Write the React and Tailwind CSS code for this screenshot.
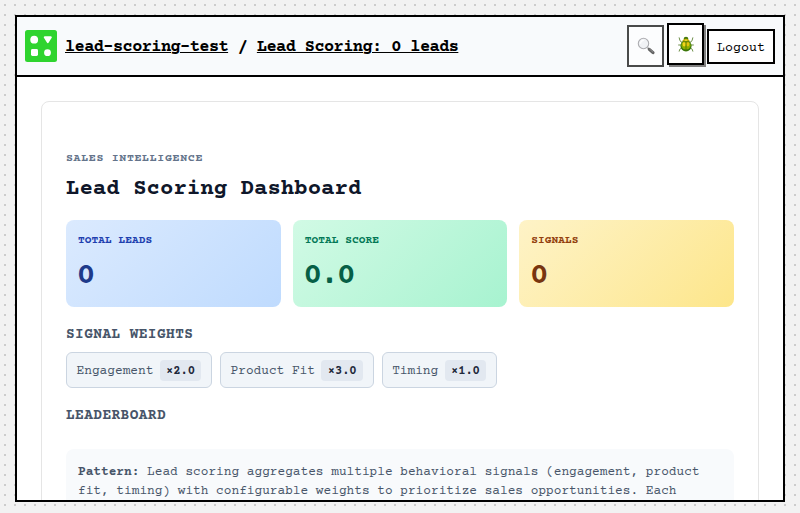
const stats = [
  { label: "TOTAL LEADS", value: "0", box: "from-[#dbeafe] to-[#bfdbfe]", head: "text-[#1e40af]", num: "text-[#1e3a8a]" },
  { label: "TOTAL SCORE", value: "0.0", box: "from-[#d1fae5] to-[#a7f3d0]", head: "text-[#047857]", num: "text-[#065f46]" },
  { label: "SIGNALS", value: "0", box: "from-[#fef3c7] to-[#fde68a]", head: "text-[#92400e]", num: "text-[#78350f]" },
];

const weights = [
  ["Engagement", "×2.0"],
  ["Product Fit", "×3.0"],
  ["Timing", "×1.0"],
];

function Logo() {
  return (
    <svg className="size-8 shrink-0" viewBox="0 0 32 32">
      <rect width="32" height="32" rx="2.5" fill="#2fd42f" />
      <g fill="#fff">
        <circle cx="9.2" cy="9.7" r="3.9" />
        <path d="M19.8 6.2h6a1 1 0 0 1 .9 1.5l-3 4.9a1 1 0 0 1-1.8 0l-3-4.9a1 1 0 0 1 .9-1.5z" />
        <rect x="6" y="19" width="7" height="7" rx="1.4" />
        <circle cx="22.5" cy="22.7" r="3.4" />
      </g>
    </svg>
  );
}

function Magnifier() {
  return (
    <svg className="size-[18px]" viewBox="0 0 18 18">
      <path d="M10.5 10.5l2 2" stroke="#777" strokeWidth="1.6" />
      <path d="M12.3 12.3l3.7 3.4" stroke="#222" strokeWidth="3" strokeLinecap="round" />
      <path d="M12.5 12l3.3 3" stroke="#777" strokeWidth=".7" strokeLinecap="round" />
      <circle cx="6.5" cy="6.5" r="5.2" fill="#eef0f3" stroke="#8d8d92" strokeWidth="1.1" />
      <path d="M3.6 6.2a3 3 0 0 1 2.8-2.8" stroke="#fff" strokeWidth="1.2" fill="none" strokeLinecap="round" />
    </svg>
  );
}

function Beetle() {
  return (
    <svg className="size-4" viewBox="0 0 16 16">
      <g fill="none" stroke="#6f8f4a" strokeWidth="1" strokeLinecap="round" strokeLinejoin="round">
        <path d="M4 6.5L2 4.8 1.2 1.8M12 6.5l2-1.7.8-3M3 9H.6M13 9h2.4M3.8 12l-2 1.2-.6 2M12.2 12l2 1.2.6 2" />
      </g>
      <ellipse cx="8" cy="2.7" rx="2.3" ry="1.9" fill="#477a0c" />
      <path d="M4.3 5.4C4.5 3.5 6 2.7 8 2.7s3.5.8 3.7 2.7z" fill="#b9a800" />
      <ellipse cx="8" cy="10" rx="5.6" ry="5.4" fill="#39780a" />
      <ellipse cx="8" cy="9.2" rx="4.6" ry="4.3" fill="#8fae00" />
      <ellipse cx="6.2" cy="8" rx="1.6" ry="2.5" fill="#f2d51c" />
      <ellipse cx="9.8" cy="8" rx="1.5" ry="2.4" fill="#e4c410" />
      <path d="M3.8 5.8h8.4M8 6v9" stroke="#4b6b05" strokeWidth=".7" />
      <ellipse cx="8" cy="4.3" rx="1.6" ry=".7" fill="#f5dc35" />
    </svg>
  );
}

export default function App() {
  return (
    <div className="h-[513px] w-[800px] overflow-hidden bg-[#f2f2f2] bg-[radial-gradient(circle,#cccccc_1px,transparent_1px)] bg-[length:10px_10px] px-[15px] pt-[15px] font-['Courier_Prime','Courier_New',Courier,'Liberation_Mono',monospace]">
      <div className="flex h-[487px] flex-col overflow-hidden border-2 border-black bg-white">
        <header className="flex h-[60px] shrink-0 items-center border-b-2 border-black bg-[#f8fafc] px-2">
          <Logo />
          <h1 className="ml-2 grow whitespace-pre pt-1 text-[17px] font-bold tracking-[-0.6px] text-black">
            <a className="underline decoration-1 underline-offset-1">lead-scoring-test</a> / <a className="underline decoration-1 underline-offset-1">Lead Scoring: 0 leads</a>
          </h1>
          <div className="flex items-center gap-[3px] text-[13.333px]">
            <button className="flex h-[42px] w-[37px] items-center justify-center border-2 border-black bg-white opacity-70"><Magnifier /></button>
            <button className="mb-1 flex h-[42px] w-[37px] items-center justify-center border-2 border-black bg-white shadow-[2px_2px_0_#808080]"><Beetle /></button>
            <button className="h-[35px] w-[68px] border-2 border-black bg-white pt-[5px] text-black">Logout</button>
          </div>
        </header>
        <main className="min-h-0 grow overflow-hidden p-6">
          <section className="rounded-lg border border-[#e5e5e5] px-6 pt-12 pb-6">
            <p className="text-[11.6px] leading-[17px] font-bold tracking-[0.66px] text-[#64748b]">SALES INTELLIGENCE</p>
            <h2 className="mt-[7px] text-[22.4px] leading-[30px] font-bold text-[#0f172a]">Lead Scoring Dashboard</h2>
            <div className="mt-4 grid grid-cols-3 gap-3">
              {stats.map((s) => (
                <div key={s.label} className={"h-[87px] rounded-lg bg-linear-135 p-3 " + s.box}>
                  <p className={"pt-px text-[11.2px] leading-4 font-bold tracking-[0.04px] " + s.head}>{s.label}</p>
                  <p className={"mt-[7px] -ml-px text-[30px] leading-[42px] font-bold tracking-[-1.2px] " + s.num}>{s.value}</p>
                </div>
              ))}
            </div>
            <h3 className="mt-[19px] text-[14.5px] leading-[19px] font-bold tracking-[0.4px] text-[#475569]">SIGNAL WEIGHTS</h3>
            <div className="mt-[7px] flex gap-2">
              {weights.map(([name, weight]) => (
                <div key={name} className="flex h-9 items-center gap-[6.4px] rounded-md border border-[#cbd5e1] bg-[#f1f5f9] px-[9.6px] text-[12.8px] text-[#475569]">
                  <span className="pt-[3px]">{name}</span>
                  <span className="h-[21px] rounded bg-[#e2e8f0] px-[6.4px] pt-px text-[12.2px] leading-[21px] font-bold tracking-[-0.1px] text-[#1e293b]">{weight}</span>
                </div>
              ))}
            </div>
            <h3 className="mt-[19px] text-[14.5px] leading-[19px] font-bold tracking-[0.4px] text-[#475569]">LEADERBOARD</h3>
            <p className="mt-[23px] rounded-lg bg-[#f8fafc] px-3 pt-3.5 pb-3 text-[12.8px] leading-[19.2px] text-[#475569]">
              <strong>Pattern:</strong> Lead scoring aggregates multiple behavioral signals (engagement, product fit, timing) with configurable weights to prioritize sales opportunities. Each
            </p>
          </section>
        </main>
      </div>
    </div>
  );
}
